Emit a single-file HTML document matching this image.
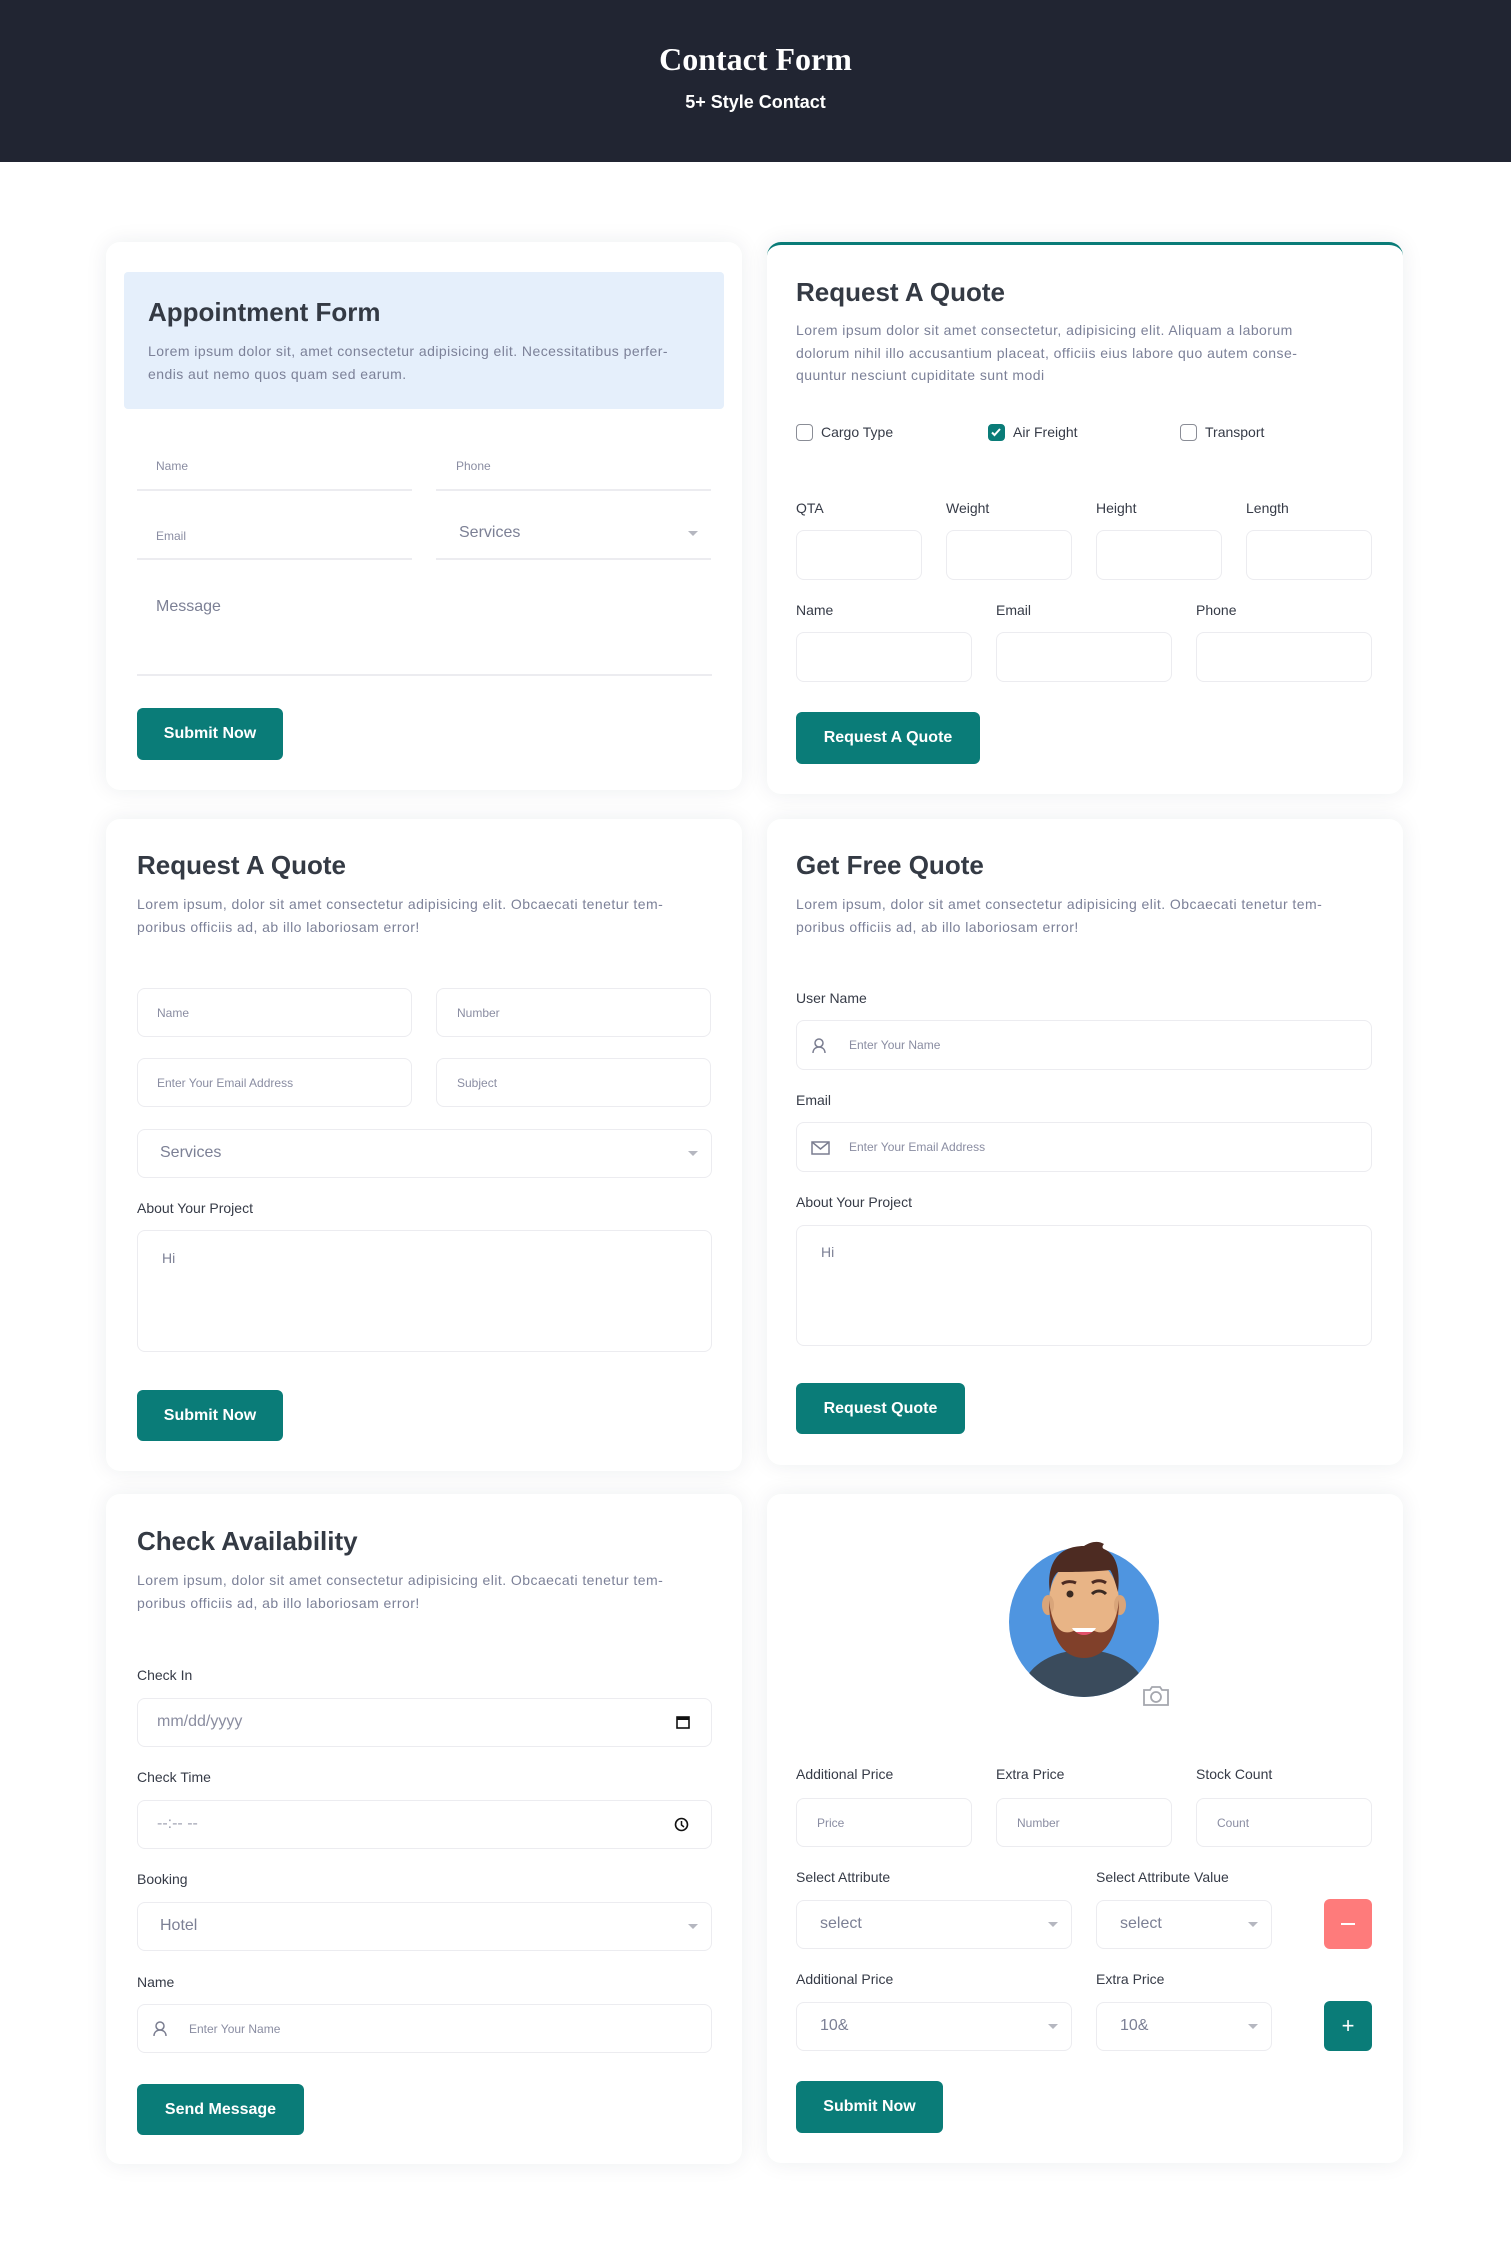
<!DOCTYPE html>
<html><head><meta charset="utf-8">
<style>
*{box-sizing:border-box;margin:0;padding:0}
body{width:1511px;height:2256px;position:relative;background:#fff;font-family:"Liberation Sans",sans-serif;overflow:hidden}
.a{position:absolute}
.hdr{left:0;top:0;width:1511px;height:162px;background:#212532}
.card{position:absolute;background:#fff;border-radius:14px;box-shadow:0 0 22px rgba(30,40,60,0.08)}
.t{position:absolute;white-space:nowrap;line-height:20px}
.h{font-size:26px;font-weight:bold;color:#343a44;line-height:32px}
.p{font-size:14px;color:#7c8198;line-height:22.5px;letter-spacing:0.45px}
.lb{font-size:14px;color:#363b47;font-weight:500}
.ph{font-size:12px;color:#8a8da2}
.big{font-size:16px;color:#7c8095}
.in{position:absolute;border:1.5px solid #ececf0;border-radius:8px;background:#fff}
.ul{position:absolute;height:2px;background:#ececf0}
.btn{position:absolute;background:#0a7c78;color:#fff;font-weight:bold;font-size:16px;border-radius:6px;display:flex;align-items:center;justify-content:center}
.arr{position:absolute;width:0;height:0;border-left:5px solid transparent;border-right:5px solid transparent;border-top:5px solid #b5b7c0}
.cb{position:absolute;width:17px;height:17px;border:1.5px solid #8a8d96;border-radius:4px}
</style></head><body>
<div class="a hdr"></div>
<div class="t" style="left:0;width:1511px;text-align:center;top:42px;line-height:34px;font-family:'Liberation Serif',serif;font-weight:bold;font-size:32px;color:#fff">Contact Form</div>
<div class="t" style="left:0;width:1511px;text-align:center;top:92px;font-size:18px;font-weight:bold;color:#fff">5+ Style Contact</div>

<!-- Card 1 -->
<div class="card" style="left:106px;top:242px;width:636px;height:548px"></div>
<div class="a" style="left:124px;top:272px;width:600px;height:137px;background:#e5effb;border-radius:4px"></div>
<div class="t h" style="left:148px;top:296px">Appointment Form</div>
<div class="t p" style="left:148px;top:340px">Lorem ipsum dolor sit, amet consectetur adipisicing elit. Necessitatibus perfer-<br>endis aut nemo quos quam sed earum.</div>
<div class="t ph" style="left:156px;top:456px">Name</div>
<div class="t ph" style="left:456px;top:456px">Phone</div>
<div class="ul" style="left:137px;top:489px;width:275px"></div>
<div class="ul" style="left:436px;top:489px;width:275px"></div>
<div class="t ph" style="left:156px;top:526px">Email</div>
<div class="t big" style="left:459px;top:523px">Services</div>
<div class="arr" style="left:688px;top:531px"></div>
<div class="ul" style="left:137px;top:558px;width:275px"></div>
<div class="ul" style="left:436px;top:558px;width:275px"></div>
<div class="t big" style="left:156px;top:597px">Message</div>
<div class="ul" style="left:137px;top:674px;width:575px"></div>
<div class="btn" style="left:137px;top:708px;width:146px;height:52px">Submit Now</div>

<!-- Card 2 -->
<div class="card" style="left:767px;top:242px;width:636px;height:552px;border-top:3px solid #0a7c78"></div>
<div class="t h" style="left:796px;top:276px">Request A Quote</div>
<div class="t p" style="left:796px;top:319px">Lorem ipsum dolor sit amet consectetur, adipisicing elit. Aliquam a laborum<br>dolorum nihil illo accusantium placeat, officiis eius labore quo autem conse-<br>quuntur nesciunt cupiditate sunt modi</div>
<div class="cb" style="left:796px;top:424px"></div>
<div class="t lb" style="left:821px;top:422px">Cargo Type</div>
<div class="cb" style="left:988px;top:424px;background:#0a7c78;border-color:#0a7c78"><svg width="14" height="14" viewBox="0 0 14 14" style="position:absolute;left:0;top:0"><path d="M3 7.5l2.5 2.5L11 4" stroke="#fff" stroke-width="2" fill="none"/></svg></div>
<div class="t lb" style="left:1013px;top:422px">Air Freight</div>
<div class="cb" style="left:1180px;top:424px"></div>
<div class="t lb" style="left:1205px;top:422px">Transport</div>
<div class="t lb" style="left:796px;top:498px">QTA</div>
<div class="t lb" style="left:946px;top:498px">Weight</div>
<div class="t lb" style="left:1096px;top:498px">Height</div>
<div class="t lb" style="left:1246px;top:498px">Length</div>
<div class="in" style="left:796px;top:530px;width:126px;height:50px"></div>
<div class="in" style="left:946px;top:530px;width:126px;height:50px"></div>
<div class="in" style="left:1096px;top:530px;width:126px;height:50px"></div>
<div class="in" style="left:1246px;top:530px;width:126px;height:50px"></div>
<div class="t lb" style="left:796px;top:600px">Name</div>
<div class="t lb" style="left:996px;top:600px">Email</div>
<div class="t lb" style="left:1196px;top:600px">Phone</div>
<div class="in" style="left:796px;top:632px;width:176px;height:50px"></div>
<div class="in" style="left:996px;top:632px;width:176px;height:50px"></div>
<div class="in" style="left:1196px;top:632px;width:176px;height:50px"></div>
<div class="btn" style="left:796px;top:712px;width:184px;height:52px">Request A Quote</div>

<!-- Card 3 -->
<div class="card" style="left:106px;top:819px;width:636px;height:652px"></div>
<div class="t h" style="left:137px;top:849px">Request A Quote</div>
<div class="t p" style="left:137px;top:893px">Lorem ipsum, dolor sit amet consectetur adipisicing elit. Obcaecati tenetur tem-<br>poribus officiis ad, ab illo laboriosam error!</div>
<div class="in" style="left:137px;top:988px;width:275px;height:49px"></div>
<div class="in" style="left:436px;top:988px;width:275px;height:49px"></div>
<div class="t ph" style="left:157px;top:1003px">Name</div>
<div class="t ph" style="left:457px;top:1003px">Number</div>
<div class="in" style="left:137px;top:1058px;width:275px;height:49px"></div>
<div class="in" style="left:436px;top:1058px;width:275px;height:49px"></div>
<div class="t ph" style="left:157px;top:1073px">Enter Your Email Address</div>
<div class="t ph" style="left:457px;top:1073px">Subject</div>
<div class="in" style="left:137px;top:1129px;width:575px;height:49px"></div>
<div class="t big" style="left:160px;top:1143px">Services</div>
<div class="arr" style="left:688px;top:1151px"></div>
<div class="t lb" style="left:137px;top:1198px">About Your Project</div>
<div class="in" style="left:137px;top:1230px;width:575px;height:122px"></div>
<div class="t big" style="left:162px;top:1248px;font-size:14px">Hi</div>
<div class="btn" style="left:137px;top:1390px;width:146px;height:51px">Submit Now</div>

<!-- Card 4 -->
<div class="card" style="left:767px;top:819px;width:636px;height:646px"></div>
<div class="t h" style="left:796px;top:849px">Get Free Quote</div>
<div class="t p" style="left:796px;top:893px">Lorem ipsum, dolor sit amet consectetur adipisicing elit. Obcaecati tenetur tem-<br>poribus officiis ad, ab illo laboriosam error!</div>
<div class="t lb" style="left:796px;top:988px">User Name</div>
<div class="in" style="left:796px;top:1020px;width:576px;height:50px"></div>
<svg class="a" style="left:811px;top:1037px" width="16" height="17" viewBox="0 0 16 17"><circle cx="8" cy="6" r="4" stroke="#7a7d90" stroke-width="1.5" fill="none"/><path d="M2 16c0-4 3-6 6-6s6 2 6 6" stroke="#7a7d90" stroke-width="1.5" fill="none"/></svg>
<div class="t ph" style="left:849px;top:1035px">Enter Your Name</div>
<div class="t lb" style="left:796px;top:1090px">Email</div>
<div class="in" style="left:796px;top:1122px;width:576px;height:50px"></div>
<svg class="a" style="left:811px;top:1141px" width="19" height="14" viewBox="0 0 19 14"><rect x="1" y="1" width="17" height="12" stroke="#7a7d90" stroke-width="1.5" fill="none"/><path d="M1 1l8.5 7L18 1" stroke="#7a7d90" stroke-width="1.5" fill="none"/></svg>
<div class="t ph" style="left:849px;top:1137px">Enter Your Email Address</div>
<div class="t lb" style="left:796px;top:1192px">About Your Project</div>
<div class="in" style="left:796px;top:1225px;width:576px;height:121px"></div>
<div class="t big" style="left:821px;top:1242px;font-size:14px">Hi</div>
<div class="btn" style="left:796px;top:1383px;width:169px;height:51px">Request Quote</div>

<!-- Card 5 -->
<div class="card" style="left:106px;top:1494px;width:636px;height:670px"></div>
<div class="t h" style="left:137px;top:1525px">Check Availability</div>
<div class="t p" style="left:137px;top:1569px">Lorem ipsum, dolor sit amet consectetur adipisicing elit. Obcaecati tenetur tem-<br>poribus officiis ad, ab illo laboriosam error!</div>
<div class="t lb" style="left:137px;top:1665px">Check In</div>
<div class="in" style="left:137px;top:1698px;width:575px;height:49px"></div>
<div class="t big" style="left:157px;top:1712px;color:#8a8da0">mm/dd/yyyy</div>
<svg class="a" style="left:676px;top:1715px" width="14" height="14" viewBox="0 0 14 14"><rect x="1" y="2" width="12" height="11" stroke="#111" stroke-width="1.6" fill="none"/><rect x="1" y="2" width="12" height="3" fill="#111"/></svg>
<div class="t lb" style="left:137px;top:1767px">Check Time</div>
<div class="in" style="left:137px;top:1800px;width:575px;height:49px"></div>
<div class="t big" style="left:157px;top:1814px;color:#a0a3b2">--:-- --</div>
<svg class="a" style="left:674px;top:1817px" width="15" height="15" viewBox="0 0 15 15"><circle cx="7.5" cy="7.5" r="6" stroke="#111" stroke-width="1.6" fill="none"/><path d="M7.5 4v4l2.5 2" stroke="#111" stroke-width="1.5" fill="none"/></svg>
<div class="t lb" style="left:137px;top:1869px">Booking</div>
<div class="in" style="left:137px;top:1902px;width:575px;height:49px"></div>
<div class="t big" style="left:160px;top:1916px">Hotel</div>
<div class="arr" style="left:688px;top:1924px"></div>
<div class="t lb" style="left:137px;top:1972px">Name</div>
<div class="in" style="left:137px;top:2004px;width:575px;height:49px"></div>
<svg class="a" style="left:152px;top:2020px" width="16" height="17" viewBox="0 0 16 17"><circle cx="8" cy="6" r="4" stroke="#7a7d90" stroke-width="1.5" fill="none"/><path d="M2 16c0-4 3-6 6-6s6 2 6 6" stroke="#7a7d90" stroke-width="1.5" fill="none"/></svg>
<div class="t ph" style="left:189px;top:2019px">Enter Your Name</div>
<div class="btn" style="left:137px;top:2084px;width:167px;height:51px">Send Message</div>

<!-- Card 6 -->
<div class="card" style="left:767px;top:1494px;width:636px;height:669px"></div>
<svg class="a" style="left:1000px;top:1530px" width="180" height="180" viewBox="0 0 180 180">
<defs><clipPath id="c"><circle cx="84" cy="92" r="75"/></clipPath></defs>
<circle cx="84" cy="92" r="75" fill="#4f95e0"/>
<g clip-path="url(#c)"><path d="M18 170c5-35 35-50 66-50s61 15 66 50z" fill="#3a4b5c"/></g>
<rect x="72" y="100" width="24" height="22" fill="#d9a57a"/>
<ellipse cx="84" cy="72" rx="35" ry="44" fill="#e8b486"/>
<ellipse cx="48" cy="75" rx="6" ry="10" fill="#d9a57a"/><ellipse cx="120" cy="75" rx="6" ry="10" fill="#d9a57a"/>
<path d="M49 70c0 30 10 58 35 58s35-28 35-58c-2 20-8 30-15 32c-8 2-12-4-20-4s-12 6-20 4c-7-2-13-12-15-32z" fill="#80402a"/>
<path d="M72 98c4 8 20 8 24 0z" fill="#fff"/><path d="M76 102c4 4 12 4 16 0" fill="#e2506a"/>
<path d="M50 62c-4-28 8-46 34-46c6-4 14-6 20-2c-2 2-2 4 0 5c14 6 16 24 14 43c-3-10-5-18-8-22c-16 2-40 2-52 2c-5 4-7 12-8 20z" fill="#4d2b22"/>
<circle cx="70" cy="64" r="3.5" fill="#3a2a22"/>
<path d="M92 64c4-4 10-4 14 0" stroke="#3a2a22" stroke-width="3" fill="none"/>
<path d="M62 54c4-3 10-3 14-1M92 53c4-3 10-3 14 0" stroke="#4d2b22" stroke-width="3" fill="none"/>
</svg>
<div class="a" style="left:1133px;top:1678px;width:46px;height:38px;background:#fff;border-radius:4px"></div>
<svg class="a" style="left:1142px;top:1685px" width="28" height="22" viewBox="0 0 28 22"><path d="M2 5h6l2-3h8l2 3h6v15H2z" stroke="#a5a7ae" stroke-width="1.8" fill="none"/><circle cx="14" cy="12" r="5" stroke="#a5a7ae" stroke-width="1.8" fill="none"/></svg>
<div class="t lb" style="left:796px;top:1764px">Additional Price</div>
<div class="t lb" style="left:996px;top:1764px">Extra Price</div>
<div class="t lb" style="left:1196px;top:1764px">Stock Count</div>
<div class="in" style="left:796px;top:1798px;width:176px;height:49px"></div>
<div class="in" style="left:996px;top:1798px;width:176px;height:49px"></div>
<div class="in" style="left:1196px;top:1798px;width:176px;height:49px"></div>
<div class="t ph" style="left:817px;top:1813px">Price</div>
<div class="t ph" style="left:1017px;top:1813px">Number</div>
<div class="t ph" style="left:1217px;top:1813px">Count</div>
<div class="t lb" style="left:796px;top:1867px">Select Attribute</div>
<div class="t lb" style="left:1096px;top:1867px">Select Attribute Value</div>
<div class="in" style="left:796px;top:1900px;width:276px;height:49px"></div>
<div class="in" style="left:1096px;top:1900px;width:176px;height:49px"></div>
<div class="t big" style="left:820px;top:1914px">select</div>
<div class="t big" style="left:1120px;top:1914px">select</div>
<div class="arr" style="left:1048px;top:1922px"></div>
<div class="arr" style="left:1248px;top:1922px"></div>
<div class="a" style="left:1324px;top:1899px;width:48px;height:50px;background:#fe7b7b;border-radius:6px"></div>
<div class="a" style="left:1341px;top:1923px;width:14px;height:1.5px;background:#fff"></div>
<div class="t lb" style="left:796px;top:1969px">Additional Price</div>
<div class="t lb" style="left:1096px;top:1969px">Extra Price</div>
<div class="in" style="left:796px;top:2002px;width:276px;height:49px"></div>
<div class="in" style="left:1096px;top:2002px;width:176px;height:49px"></div>
<div class="t big" style="left:820px;top:2016px">10&amp;</div>
<div class="t big" style="left:1120px;top:2016px">10&amp;</div>
<div class="arr" style="left:1048px;top:2024px"></div>
<div class="arr" style="left:1248px;top:2024px"></div>
<div class="btn" style="left:1324px;top:2001px;width:48px;height:50px;font-weight:normal;font-size:22px">+</div>
<div class="btn" style="left:796px;top:2081px;width:147px;height:52px">Submit Now</div>
</body></html>
